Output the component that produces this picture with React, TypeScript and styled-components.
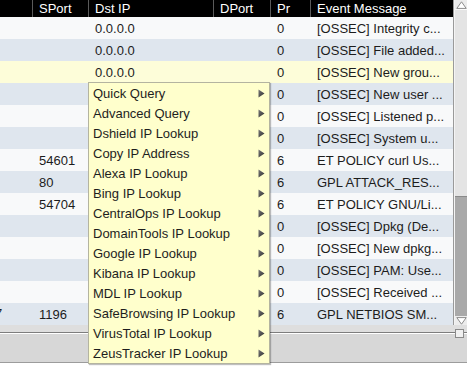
import React from "react";
import styled, { createGlobalStyle } from "styled-components";

const Global = createGlobalStyle`
  html, body { margin: 0; padding: 0; background: #ffffff; }
  body { font-family: "Liberation Sans", Arial, sans-serif; font-size: 13px; color: #1a1a1a; }
`;

const Page = styled.div`
  position: relative;
  width: 467px;
  height: 390px;
  overflow: hidden;
  background: #ffffff;
`;

const Top = styled.div`
  display: flex;
  height: 325px;
`;

const Table = styled.div`
  width: 454px;
  display: flex;
  flex-direction: column;
  border-right: 1px solid #9a9a9a;
  box-sizing: border-box;
`;

const cols = "32px 56px 125px 57px 40px 1fr";

const Header = styled.div`
  display: grid;
  grid-template-columns: ${cols};
  height: 17px;
  background: #000;
  color: #fff;
`;

const HeadCell = styled.div<{ $first?: boolean }>`
  box-sizing: border-box;
  padding-left: ${(p) => (p.$first ? 0 : 6)}px;
  border-left: ${(p) => (p.$first ? "none" : "1px solid #5a5a5a")};
  line-height: 17px;
  font-size: 13px;
  white-space: nowrap;
  overflow: hidden;
`;

const Row = styled.div<{ $bg: string }>`
  display: grid;
  grid-template-columns: ${cols};
  height: 22px;
  background: ${(p) => p.$bg};
`;

const Cell = styled.div`
  box-sizing: border-box;
  padding-left: 7px;
  padding-top: 1px;
  line-height: 22px;
  font-size: 13px;
  white-space: nowrap;
  overflow: hidden;
  color: #1c1c1c;
`;

const EdgeCell = styled.div`
  overflow: hidden;
  white-space: nowrap;
  line-height: 22px;
  color: #1c1c1c;
  span { display: inline-block; margin-left: -5px; }
`;

const Scroll = styled.div`
  width: 13px;
  display: flex;
  flex-direction: column;
  background: #a9a9a9;
  border-left: 1px solid #f4f4f4;
  box-sizing: border-box;
`;

const ArrowBtn = styled.div`
  height: 9px;
  background: #ececec;
  display: flex;
  align-items: center;
  justify-content: center;
`;

const Thumb = styled.div`
  height: 188px;
  background: #e4e4e4;
  border-top: 1px solid #fafafa;
  border-bottom: 1px solid #8a8a8a;
  box-sizing: border-box;
`;

const Track = styled.div`
  flex: 1;
  background: #a9a9a9;
`;

const Strip = styled.div`
  position: relative;
  height: 7px;
  background: #dedede;
  border-bottom: 1px solid #7d7d7d;
`;

const Grip = styled.div`
  position: absolute;
  left: 455px;
  top: 4px;
  width: 7px;
  height: 7px;
  background: #f0f0f0;
  border: 1px solid #8a8a8a;
  z-index: 1;
`;

const Panel = styled.div`
  height: 28px;
  background: #d7d7d7;
  border-top: 1px solid #ffffff;
  border-bottom: 1px solid #9c9c9c;
`;

const Menu = styled.div`
  position: absolute;
  left: 88px;
  top: 82px;
  width: 182px;
  background: #ffffcc;
  border: 1px solid #b4b4a0;
  box-sizing: border-box;
  box-shadow: 1px 1px 1px rgba(0, 0, 0, 0.25);
  z-index: 2;
`;

const Item = styled.div`
  display: flex;
  align-items: center;
  justify-content: space-between;
  height: 20px;
  padding-left: 4px;
  padding-right: 4px;
  font-size: 13px;
  color: #1e1e1e;
  white-space: nowrap;
`;

const Tri = () => (
  <svg width="7" height="9" viewBox="0 0 7 9">
    <defs>
      <linearGradient id="tg" x1="0" y1="0" x2="1" y2="1">
        <stop offset="0" stopColor="#7a7a7a" />
        <stop offset="1" stopColor="#2a2a2a" />
      </linearGradient>
    </defs>
    <polygon points="0.5,0.5 6.5,4.5 0.5,8.5" fill="url(#tg)" />
  </svg>
);

const UpIcon = () => (
  <svg width="11" height="8" viewBox="0 0 11 8">
    <polygon points="5.5,0.8 10.2,7.4 0.8,7.4" fill="#ffffff" stroke="#8c8c8c" strokeWidth="1" />
  </svg>
);

const DownIcon = () => (
  <svg width="11" height="8" viewBox="0 0 11 8">
    <polygon points="0.8,0.6 10.2,0.6 5.5,7.2" fill="#ffffff" stroke="#8c8c8c" strokeWidth="1" />
  </svg>
);

type R = { edge?: string; sport: string; dst: string; dport: string; pr: string; msg: string };

const rows: R[] = [
  { sport: "", dst: "0.0.0.0", dport: "", pr: "0", msg: "[OSSEC] Integrity c..." },
  { sport: "", dst: "0.0.0.0", dport: "", pr: "0", msg: "[OSSEC] File added..." },
  { sport: "", dst: "0.0.0.0", dport: "", pr: "0", msg: "[OSSEC] New grou..." },
  { sport: "", dst: "", dport: "", pr: "0", msg: "[OSSEC] New user ..." },
  { sport: "", dst: "", dport: "", pr: "0", msg: "[OSSEC] Listened p..." },
  { sport: "", dst: "", dport: "", pr: "0", msg: "[OSSEC] System u..." },
  { sport: "54601", dst: "", dport: "", pr: "6", msg: "ET POLICY curl Us..." },
  { sport: "80", dst: "", dport: "", pr: "6", msg: "GPL ATTACK_RES..." },
  { sport: "54704", dst: "", dport: "", pr: "6", msg: "ET POLICY GNU/Li..." },
  { sport: "", dst: "", dport: "", pr: "0", msg: "[OSSEC] Dpkg (De..." },
  { sport: "", dst: "", dport: "", pr: "0", msg: "[OSSEC] New dpkg..." },
  { sport: "", dst: "", dport: "", pr: "0", msg: "[OSSEC] PAM: Use..." },
  { sport: "", dst: "", dport: "", pr: "0", msg: "[OSSEC] Received ..." },
  { edge: "7", sport: "1196", dst: "", dport: "", pr: "6", msg: "GPL NETBIOS SM..." },
];

const menuItems = [
  "Quick Query",
  "Advanced Query",
  "Dshield IP Lookup",
  "Copy IP Address",
  "Alexa IP Lookup",
  "Bing IP Lookup",
  "CentralOps IP Lookup",
  "DomainTools IP Lookup",
  "Google IP Lookup",
  "Kibana IP Lookup",
  "MDL IP Lookup",
  "SafeBrowsing IP Lookup",
  "VirusTotal IP Lookup",
  "ZeusTracker IP Lookup",
];

const rowBg = (i: number) => (i === 2 ? "#fdfdd9" : i % 2 === 1 ? "#dfe6ee" : "#f8f9fa");

export default function App() {
  return (
    <Page>
      <Global />
      <Top>
        <Table>
          <Header>
            <HeadCell $first />
            <HeadCell>SPort</HeadCell>
            <HeadCell>Dst IP</HeadCell>
            <HeadCell>DPort</HeadCell>
            <HeadCell>Pr</HeadCell>
            <HeadCell>Event Message</HeadCell>
          </Header>
          {rows.map((r, i) => (
            <Row key={i} $bg={rowBg(i)}>
              <EdgeCell>{r.edge ? <span>{r.edge}</span> : null}</EdgeCell>
              <Cell>{r.sport}</Cell>
              <Cell>{r.dst}</Cell>
              <Cell>{r.dport}</Cell>
              <Cell>{r.pr}</Cell>
              <Cell>{r.msg}</Cell>
            </Row>
          ))}
        </Table>
        <Scroll>
          <ArrowBtn>
            <UpIcon />
          </ArrowBtn>
          <Thumb />
          <Track />
          <ArrowBtn>
            <DownIcon />
          </ArrowBtn>
        </Scroll>
      </Top>
      <Strip>
        <Grip />
      </Strip>
      <Panel />
      <Menu>
        {menuItems.map((m) => (
          <Item key={m}>
            <span>{m}</span>
            <Tri />
          </Item>
        ))}
      </Menu>
    </Page>
  );
}
